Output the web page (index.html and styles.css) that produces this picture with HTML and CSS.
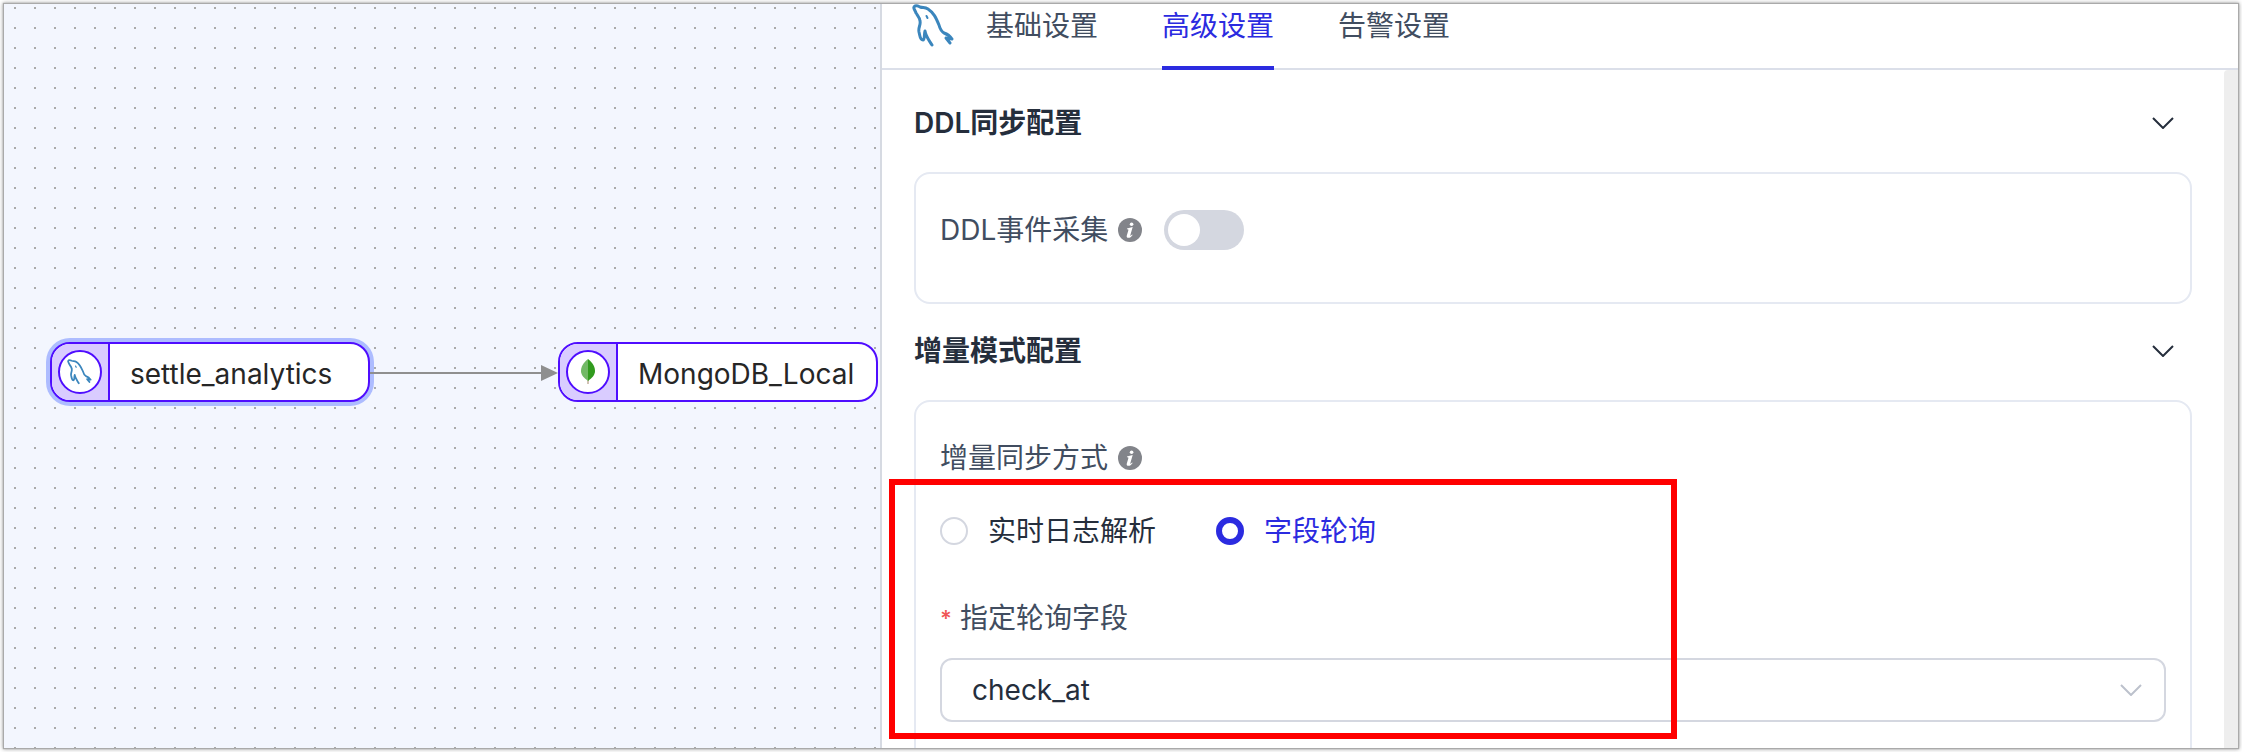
FILE: index.html
```html
<!DOCTYPE html>
<html lang="zh-CN">
<head>
<meta charset="utf-8">
<title>任务设置</title>
<link rel="stylesheet" href="styles.css">
</head>
<body>
<svg class="defs" aria-hidden="true">
  <symbol id="dolphin" viewBox="0 0 44 44">
    <path d="M4 9C3 6 1 4 2 3c1-2 4-1 6 0 3 1 5 0 8 2 6 4 8 9 11 16 1 4 2 6 5 8 3 1 6 3 8 6l-6-1 4 5M4 9c2 3 4 5 4 8 1 4-2 6-1 11 1 4 1 8 4 8 2 0 1-6 2-9 1 6 4 9 7 14" fill="none" stroke="currentColor" stroke-width="3" stroke-linecap="round" stroke-linejoin="round"/>
    <path d="M14.500 12l1 2" stroke="currentColor" stroke-width="2" stroke-linecap="round"/>
  </symbol>
  <symbol id="info" viewBox="0 0 24 24">
    <circle cx="12" cy="12" r="12" fill="#82848a"/>
    <circle cx="13.6" cy="6.2" r="1.8" fill="#fff"/>
    <path d="M9 10.400c2-.2 3.700-.6 5.700-1.300l-2.400 8.200c-.2.8.3.9 1.800-.8l.5.4c-1.400 2-2.600 2.900-4.200 2.900-1.400 0-2-1-1.600-2.400l1.500-5c.3-1-.1-1.200-1.400-1.200z" fill="#fff"/>
  </symbol>
  <symbol id="chevron" viewBox="0 0 22 12">
    <path d="M1 1l10 10L21 1" fill="none" stroke="currentColor" stroke-width="2"/>
  </symbol>
</svg>
<div class="window">
  <main class="canvas">
    <div class="node node-source selected">
      <span class="node-side"><span class="node-icon"><svg class="node-dolphin"><use href="#dolphin"/></svg></span></span>
      <span class="node-name">settle_analytics</span>
    </div>
    <svg class="edge" viewBox="0 0 188 16" aria-hidden="true">
      <path d="M0 8h172" stroke="#8f8f8f" stroke-width="2"/>
      <path d="M171 0l17 8-17 8z" fill="#8f8f8f"/>
    </svg>
    <div class="node node-target">
      <span class="node-side"><span class="node-icon">
        <svg class="node-leaf" viewBox="0 0 16 26"><path d="M7.500 20h1v5h-1z" fill="#a6856a"/><path d="M8 0C3 4 1 8 1 12c0 4 3 7 7 10z" fill="#72b966"/><path d="M8 0c5 4 7 8 7 12 0 4-3 7-7 10z" fill="#319b1e"/></svg>
      </span></span>
      <span class="node-name">MongoDB_Local</span>
    </div>
  </main>
  <aside class="panel">
    <header class="panel-head">
      <svg class="brand"><use href="#dolphin"/></svg>
      <nav class="tabs">
        <button class="tab" type="button">基础设置</button>
        <button class="tab active" type="button">高级设置</button>
        <button class="tab" type="button">告警设置</button>
      </nav>
    </header>
    <div class="panel-scroll">
      <form class="panel-body">
        <h2 class="section-title"><span>DDL同步配置</span><svg class="chevron"><use href="#chevron"/></svg></h2>
        <section class="card">
          <div class="row">
            <label for="ddl">DDL事件采集</label>
            <svg class="info"><use href="#info"/></svg>
            <input class="switch" id="ddl" type="checkbox" role="switch">
          </div>
        </section>
        <h2 class="section-title"><span>增量模式配置</span><svg class="chevron"><use href="#chevron"/></svg></h2>
        <section class="card">
          <div class="row"><span>增量同步方式</span><svg class="info"><use href="#info"/></svg></div>
          <div class="radios">
            <label class="radio"><input type="radio" name="mode"><span>实时日志解析</span></label>
            <label class="radio"><input type="radio" name="mode" checked><span>字段轮询</span></label>
          </div>
          <label class="row" for="field"><span class="star">*</span>指定轮询字段</label>
          <div class="select-wrap">
            <select class="select" id="field"><option>check_at</option></select>
            <svg class="select-arrow"><use href="#chevron"/></svg>
          </div>
          <div class="highlight"></div>
        </section>
      </form>
      <div class="scrollbar"></div>
    </div>
  </aside>
</div>
</body>
</html>
```
FILE: styles.css
```css
* { box-sizing: border-box; }
body {
  margin: 0;
  padding: 4px;
  height: 100vh;
  overflow: hidden;
  background: #fff;
  font: 28px/40px Inter, "Noto Sans CJK SC", sans-serif;
  color: #414d60;
}
.defs { position: absolute; width: 0; height: 0; }
.window {
  display: grid;
  grid-template-columns: 876px 1fr;
  height: 100%;
  overflow: hidden;
  box-shadow: 0 0 1px 1px #aaa, 0 0 4px 1px #999;
}
.canvas {
  position: relative;
  background: #f3f6fe conic-gradient(from 90deg at 18px 18px, #aaa 25%, transparent 0) -8px -15px / 20px 20px;
}
.node {
  position: absolute;
  top: 338px;
  display: flex;
  width: 320px;
  height: 60px;
  border: 2px solid #4f0dff;
  border-radius: 20px;
  background: #fff;
  overflow: hidden;
  color: #262626;
}
.node-source { left: 46px; }
.node-target { left: 554px; }
.selected { box-shadow: 0 0 0 4px #adbcff; }
.node-side {
  display: grid;
  place-items: center;
  width: 58px;
  background: #d9ccff;
  border-right: 2px solid #4f0dff;
}
.node-icon {
  display: grid;
  place-items: center;
  width: 44px;
  height: 44px;
  border: 2px solid #4f0dff;
  border-radius: 50%;
  background: #fff;
}
.node-dolphin { width: 26px; height: 26px; color: #3b86bd; }
.node-leaf { width: 16px; height: 26px; }
.node-name { flex: 1; padding-left: 20px; line-height: 60px; }
.edge { position: absolute; left: 366px; top: 361px; width: 188px; height: 16px; }
.panel {
  display: flex;
  flex-direction: column;
  min-width: 0;
  min-height: 0;
  border-left: 2px solid #d6dae2;
  background: #fff;
}
.panel-head {
  display: flex;
  gap: 30px;
  height: 66px;
  padding-left: 30px;
  border-bottom: 2px solid #dbdfe9;
  flex: none;
}
.brand { width: 44px; height: 44px; color: #3b86bd; }
.tabs { display: flex; gap: 64px; }
.tab {
  height: 66px;
  padding: 0 0 18px;
  border: 0;
  border-bottom: 4px solid transparent;
  background: none;
  font: inherit;
  color: inherit;
}
.tab.active { color: #2b2be0; border-color: #2b2be0; }
.panel-scroll { display: flex; flex: 1; min-height: 0; }
.panel-body { flex: 1; min-width: 0; padding: 6px 32px 0; }
.scrollbar { width: 14px; background: #eee; border-radius: 4px 0 0 0; }
.section-title {
  display: flex;
  align-items: center;
  justify-content: space-between;
  height: 96px;
  margin: 0;
  padding: 0 18px 2px 0;
  font-size: 28px;
  font-weight: 600;
  color: #252e3c;
}
.chevron { width: 22px; height: 12px; }
.card {
  position: relative;
  padding: 36px 24px 52px;
  border: 2px solid #e5e9f2;
  border-radius: 16px;
}
.row { display: flex; align-items: center; height: 40px; }
.info { width: 24px; height: 24px; margin-left: 10px; }
.switch {
  appearance: none;
  width: 80px;
  height: 40px;
  margin: 0 0 0 22px;
  padding: 4px;
  border-radius: 20px;
  background: #d4d7e0;
}
.switch::before {
  content: "";
  display: block;
  width: 32px;
  height: 32px;
  border-radius: 50%;
  background: #fff;
}
.switch:checked::before { margin-left: auto; }
.radios { display: flex; gap: 60px; padding: 32px 0 46px; }
.radio { display: flex; align-items: center; gap: 20px; height: 42px; color: #252e3c; }
.radio input {
  appearance: none;
  width: 28px;
  height: 28px;
  margin: 0;
  border: 2px solid #d4d7e0;
  border-radius: 50%;
  background: #fff;
}
.radio input:checked { border: 6px solid #2b2be0; }
.radio:has(input:checked) { color: #2b2be0; }
.star { margin-right: 8px; font-size: 22px; font-weight: 600; color: #f05656; }
.select-wrap { position: relative; margin-top: 20px; }
.select {
  appearance: none;
  display: block;
  width: 100%;
  height: 64px;
  padding: 0 60px 0 30px;
  border: 2px solid #d4d7e0;
  border-radius: 12px;
  background: #fff;
  font: inherit;
  color: #252e3c;
}
.select-arrow { position: absolute; right: 24px; top: 26px; width: 22px; height: 12px; color: #bcc1cc; pointer-events: none; }
.highlight {
  position: absolute;
  left: -27px;
  top: 77px;
  width: 788px;
  height: 260px;
  border: 6px solid #f00;
  pointer-events: none;
}
```
